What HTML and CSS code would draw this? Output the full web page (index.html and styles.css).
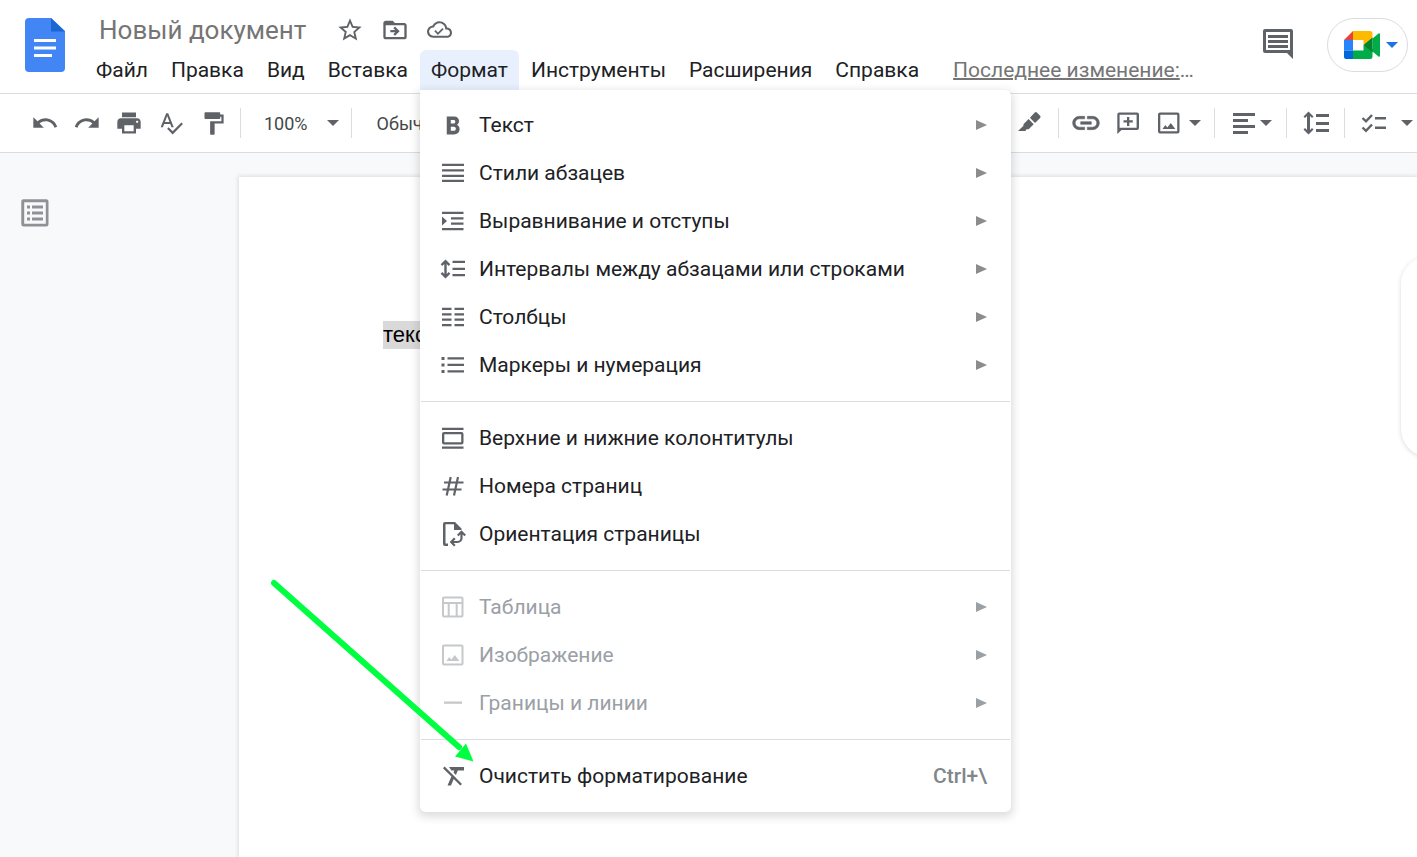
FILE: index.html
```html
<!DOCTYPE html>
<html lang="ru">
<head>
<meta charset="utf-8">
<meta name="viewport" content="width=device-width, initial-scale=1">
<title>Новый документ</title>
<link rel="stylesheet" href="styles.css">
</head>
<body>
<div class="app">
  <header class="header">
    <a class="logo" href="#" aria-label="Документы">
      <svg width="40" height="54" viewBox="0 0 40 54"><path fill="#4285f4" d="M4 0h22l14 13v37a4 4 0 0 1-4 4H4a4 4 0 0 1-4-4V4a4 4 0 0 1 4-4z"/><path fill="#1967d2" d="M26 0l14 13.500H26z"/><path fill="#fff" d="M9 21h22v3H9zM9 28.500h22v3H9zM9 36h18v3H9z"/></svg>
    </a>
    <div class="heading">
      <div class="title-row">
        <input class="title" type="text" value="Новый документ" aria-label="Название документа">
        <button class="title-btn" aria-label="Пометить"><svg width="28" height="28" viewBox="0 0 24 24"><path d="M22 9.240l-7.190-.62L12 2 9.190 8.630 2 9.240l5.460 4.730L5.820 21 12 17.270 18.180 21l-1.630-7.030L22 9.240zM12 15.400l-3.760 2.270 1-4.280-3.320-2.880 4.380-.38L12 6.100l1.710 4.040 4.380.38-3.320 2.880 1 4.280L12 15.400z"/></svg></button>
        <button class="title-btn" aria-label="Переместить"><svg width="28" height="28" viewBox="0 0 24 24"><path d="M20 6h-8l-2-2H4c-1.100 0-2 .9-2 2v12c0 1.100.9 2 2 2h16c1.100 0 2-.9 2-2V8c0-1.100-.9-2-2-2zm0 12H4V8h16v10zm-8-1l4-4-4-4-1.400 1.400 1.600 1.600H8v2h4.200l-1.600 1.600z"/></svg></button>
        <button class="title-btn" aria-label="Статус документа"><svg width="25" height="25" viewBox="0 0 24 24"><path d="M19.350 10.040A7.490 7.490 0 0 0 12 4C9.110 4 6.600 5.640 5.350 8.040A5.994 5.994 0 0 0 0 14c0 3.310 2.690 6 6 6h13c2.760 0 5-2.240 5-5 0-2.640-2.050-4.780-4.650-4.960zM19 18H6c-2.210 0-4-1.790-4-4s1.790-4 4-4h.71C7.370 7.690 9.480 6 12 6c3.040 0 5.500 2.460 5.500 5.500v.5H19c1.660 0 3 1.340 3 3s-1.340 3-3 3zm-8.500-3.200L8.200 12.500 7 13.700l3.500 3.500 5.500-5.500-1.200-1.200z"/></svg></button>
      </div>
      <nav class="menubar">
        <button class="menu-btn">Файл</button>
        <button class="menu-btn">Правка</button>
        <button class="menu-btn">Вид</button>
        <button class="menu-btn">Вставка</button>
        <div class="menu-open">
          <button class="menu-btn active" aria-expanded="true">Формат</button>
          <div class="dropdown">
            <button class="item"><span class="ico"><svg width="27" height="27" viewBox="0 0 24 24"><path d="M6 4h6.500c2.600 0 4.400 1.600 4.400 4 0 1.500-.7 2.700-1.900 3.400 1.500.7 2.400 2 2.400 3.800 0 2.900-2 4.800-5 4.800H6zm3.600 3v3.200h2.400c1 0 1.600-.6 1.600-1.600S13 7 12 7zm0 6v3.700h2.700c1.100 0 1.800-.7 1.800-1.800S13.400 13 12.300 13z"/></svg></span><span class="label">Текст</span><span class="tri"></span></button>
            <button class="item"><span class="ico"><svg width="28" height="28" viewBox="0 0 28 28"><path d="M3 4.700h22v2.300H3zM3 10.200h22v2.300H3zM3 15.700h22v2.300H3zM3 20.700h22v2.300H3z"/></svg></span><span class="label">Стили абзацев</span><span class="tri"></span></button>
            <button class="item"><span class="ico"><svg width="28" height="28" viewBox="0 0 28 28"><path d="M3 4.700h21.500v2.300H3zM12 10.200h12.500v2.300H12zM12 15.500h12.500v2.300H12zM3 20.900h21.500v2.300H3zM3 9.500l5 4.500-5 4.500z"/></svg></span><span class="label">Выравнивание и отступы</span><span class="tri"></span></button>
            <button class="item"><span class="ico"><svg width="28" height="28" viewBox="0 0 28 28"><path d="M13.500 5.800H26v2.300H13.500zM13.500 12.800H26v2.300H13.500zM13.500 19H26v2.300H13.500zM6.500 4.500l4.800 4.800-1.600 1.600-2-2v10.200l2-2 1.600 1.600-4.800 4.800-4.800-4.800 1.600-1.600 2 2V8.900l-2 2-1.600-1.600z"/></svg></span><span class="label">Интервалы между абзацами или строками</span><span class="tri"></span></button>
            <button class="item"><span class="ico"><svg width="28" height="28" viewBox="0 0 28 28"><path d="M3 4.700h9.500v2.300H3zM15.500 4.700H25v2.300h-9.500zM3 10.200h9.500v2.300H3zM15.500 10.200H25v2.300h-9.500zM3 15.500h9.500v2.300H3zM15.500 15.500H25v2.300h-9.500zM3 20.900h9.500v2.300H3zM15.500 20.900H25v2.300h-9.500z"/></svg></span><span class="label">Столбцы</span><span class="tri"></span></button>
            <button class="item"><span class="ico"><svg width="28" height="28" viewBox="0 0 28 28"><path d="M8.500 6.200H25v2.300H8.500zM8.500 12.700H25v2.300H8.500zM8.500 19.200H25v2.300H8.500zM2.500 6H5.500v3H2.500zM2.500 12.500H5.500v3H2.500zM2.500 19H5.500v3H2.500z"/></svg></span><span class="label">Маркеры и нумерация</span><span class="tri"></span></button>
            <hr class="rule">
            <button class="item"><span class="ico"><svg width="28" height="28" viewBox="0 0 28 28"><path fill-rule="evenodd" d="M3 3.800h21.500v2.300H3zM3 22.500h21.500v2.300H3zM5 8h17.500a2 2 0 0 1 2 2v8.500a2 2 0 0 1-2 2H5a2 2 0 0 1-2-2V10a2 2 0 0 1 2-2zm.3 2.300v7.900h16.900v-7.900z"/></svg></span><span class="label">Верхние и нижние колонтитулы</span></button>
            <button class="item"><span class="ico"><svg width="28" height="28" viewBox="0 0 28 28"><path fill="none" stroke="#5f6368" stroke-width="2.200" d="M11.700 5L7.700 23.500M19 5l-4 18.500M5 10.500h19.500M3.500 17.500h19"/></svg></span><span class="label">Номера страниц</span></button>
            <button class="item"><span class="ico"><svg width="28" height="28" viewBox="0 0 28 28"><path d="M6 2h10l6.500 6.500V10H15V4.300H6.500v19.200H9V26H6a2 2 0 0 1-2-2V4a2 2 0 0 1 2-2z"/><path fill="none" stroke="#5f6368" stroke-width="2.200" d="M13 22h5.500a4 4 0 0 0 4-4v-5M15.800 18.300L12.200 22l3.600 3.700M18.800 15.500l3.700-3.700 3.700 3.700"/></svg></span><span class="label">Ориентация страницы</span></button>
            <hr class="rule">
            <button class="item" disabled><span class="ico"><svg width="28" height="28" viewBox="0 0 28 28"><path fill-rule="evenodd" d="M5 3.500h17.500a2 2 0 0 1 2 2v17a2 2 0 0 1-2 2H5a2 2 0 0 1-2-2v-17a2 2 0 0 1 2-2zm0 2v3.500h17.500V5.500zM5 11v11.500h3.700V11zm5.700 0v11.500h6V11zm8 0v11.500h3.800V11z"/></svg></span><span class="label">Таблица</span><span class="tri"></span></button>
            <button class="item" disabled><span class="ico"><svg width="28" height="28" viewBox="0 0 28 28"><path fill-rule="evenodd" d="M5 3.500h17.500a2 2 0 0 1 2 2v17a2 2 0 0 1-2 2H5a2 2 0 0 1-2-2v-17a2 2 0 0 1 2-2zm0 2v17h17.500v-17zM7.500 20l2.800-4 2 2.500 3.500-4.500 4.500 6z"/></svg></span><span class="label">Изображение</span><span class="tri"></span></button>
            <button class="item" disabled><span class="ico"><svg width="28" height="28" viewBox="0 0 28 28"><path d="M5 12.500h18v2.300H5z"/></svg></span><span class="label">Границы и линии</span><span class="tri"></span></button>
            <hr class="rule">
            <button class="item"><span class="ico"><svg width="28" height="28" viewBox="0 0 28 28"><path d="M10 5h15v3.500h-6.200L16.900 13l-2.400-2.400.9-2.100h-3zM4 6.200L5.600 4.600 23 22l-1.600 1.600-6.700-6.700L12 23.500H8.500l3.900-8.900z"/></svg></span><span class="label">Очистить форматирование</span><span class="shortcut">Ctrl+\</span></button>
          </div>
        </div>
        <button class="menu-btn">Инструменты</button>
        <button class="menu-btn">Расширения</button>
        <button class="menu-btn">Справка</button>
        <span class="last-edit"><a class="last-link" href="#">Последнее изменение:</a>…</span>
      </nav>
    </div>
    <div class="header-right">
      <button class="comments" aria-label="История комментариев"><svg width="32" height="32" viewBox="0 0 32 32"><path fill-rule="evenodd" d="M3 0h26a2 2 0 0 1 2 2v28l-6-6H3a2 2 0 0 1-2-2V2a2 2 0 0 1 2-2zm1 3v18h24V3zM6 6h20v3H6zM6 11h20v3H6zM6 16h20v3H6z"/></svg></button>
      <button class="meet" aria-label="Видеовстреча">
        <svg width="36" height="28" viewBox="0 0 36 28"><path fill="#ea4335" d="M0 9l9-9v9z"/><path fill="#2684fc" d="M0 9h9v10.500H0z"/><path fill="#0066da" d="M0 19.500h9V28H2a2 2 0 0 1-2-2z"/><path fill="#ffba00" d="M9 0h17a2.500 2.500 0 0 1 2.500 2.500V9l-9 5V9H9z"/><path fill="#00ac47" d="M9 19.500h10.500V14l9 4v7.500A2.500 2.500 0 0 1 26 28H9zM28.500 7.500L34.500 2.500c.7-.5 1.500-.1 1.500.7v21.600c0 .8-.8 1.200-1.500.7l-6-5z"/><path fill="#00832d" d="M19.500 14l9-7.500v15z"/></svg>
        <span class="caret blue"></span>
      </button>
    </div>
  </header>

  <div class="toolbar">
    <button class="tool" aria-label="Отменить"><svg width="28" height="28" viewBox="0 0 24 24"><path d="M12.500 8c-2.650 0-5.050.99-6.900 2.600L2 7v9h9l-3.620-3.620c1.390-1.160 3.160-1.880 5.120-1.880 3.540 0 6.550 2.310 7.600 5.500l2.370-.78C21.080 11.030 17.150 8 12.500 8z"/></svg></button>
    <button class="tool" aria-label="Повторить"><svg width="28" height="28" viewBox="0 0 24 24"><path d="M18.400 10.600C16.550 8.990 14.150 8 11.500 8c-4.650 0-8.580 3.030-9.960 7.220L3.900 16c1.050-3.190 4.050-5.500 7.600-5.500 1.950 0 3.730.72 5.120 1.880L13 16h9V7l-3.600 3.600z"/></svg></button>
    <button class="tool" aria-label="Печать"><svg width="28" height="28" viewBox="0 0 24 24"><path d="M19 8H5c-1.660 0-3 1.340-3 3v6h4v4h12v-4h4v-6c0-1.660-1.340-3-3-3zm-3 11H8v-5h8v5zm3-7c-.55 0-1-.45-1-1s.45-1 1-1 1 .45 1 1-.45 1-1 1zm-1-9H6v4h12V3z"/></svg></button>
    <button class="tool" aria-label="Правописание"><svg width="26" height="26" viewBox="0 0 24 24"><path d="M12.450 16h2.090L9.430 3H7.570L2.460 16h2.090l1.120-3h5.640l1.140 3zm-6.020-5L8.500 5.480 10.570 11H6.430zm15.160.59l-8.090 8.090L9.830 16l-1.410 1.410 5.090 5.090L23 13l-1.410-1.410z"/></svg></button>
    <button class="tool" aria-label="Копировать форматирование"><svg width="27" height="27" viewBox="0 0 24 24"><path d="M18 4V3c0-.55-.45-1-1-1H5c-.55 0-1 .45-1 1v4c0 .55.45 1 1 1h12c.55 0 1-.45 1-1V6h1v4H9v11c0 .55.45 1 1 1h2c.55 0 1-.45 1-1v-9h8V4h-3z"/></svg></button>
    <span class="sep"></span>
    <button class="zoom">100%<span class="caret"></span></button>
    <span class="sep"></span>
    <button class="style">Обычный</button>
    <span class="spacer"></span>
    <button class="tool narrow" aria-label="Цвет выделения"><svg width="24" height="24" viewBox="0 0 24 24"><path d="M16.800 1.600a1.500 1.500 0 0 1 2.100 0l3.200 3.200a1.500 1.500 0 0 1 0 2.100L17 11.900 11.900 6.800zM10.600 8.100l5.100 5.100-4.500 4.500c-.7.700-1.600.8-2.300.4L7.300 20H0l5.500-5.300c-.3-.7-.1-1.500.4-2z"/></svg></button>
    <span class="sep"></span>
    <button class="tool" aria-label="Ссылка"><svg width="32" height="32" viewBox="0 0 24 24"><path stroke="#5f6368" stroke-width=".4" d="M3.900 12c0-1.710 1.390-3.100 3.100-3.100h4V7H7c-2.760 0-5 2.240-5 5s2.240 5 5 5h4v-1.900H7c-1.710 0-3.100-1.390-3.100-3.100zM8 13h8v-2H8v2zm9-6h-4v1.900h4c1.710 0 3.100 1.390 3.100 3.100s-1.390 3.100-3.100 3.100h-4V17h4c2.760 0 5-2.240 5-5s-2.240-5-5-5z"/></svg></button>
    <button class="tool" aria-label="Добавить комментарий"><svg width="28" height="28" viewBox="0 0 28 28"><path fill-rule="evenodd" d="M5 3.500h18a2 2 0 0 1 2 2v13.500a2 2 0 0 1-2 2H7.500L3.300 25V5.500a2 2 0 0 1 2-2zm.6 2.300v13h17v-13zM13 8h2.300v3.300h3.500v2.300h-3.500V17H13v-3.400H9.500v-2.300H13z"/></svg></button>
    <button class="tool pair" aria-label="Изображение"><svg width="28" height="28" viewBox="0 0 28 28"><path fill-rule="evenodd" d="M5 3.500h17.500a2 2 0 0 1 2 2v17a2 2 0 0 1-2 2H5a2 2 0 0 1-2-2v-17a2 2 0 0 1 2-2zm.3 2.300v16.400h16.900V5.800zM7.500 20l2.800-4 2 2.500 3.500-4.500 4.500 6z"/></svg><span class="caret"></span></button>
    <span class="sep"></span>
    <button class="tool align" aria-label="Выравнивание"><svg width="24" height="24" viewBox="0 0 24 24"><path d="M1 2h22v3H1zM1 8h15v3H1zM1 14h22v3H1zM1 20h15v3H1z"/></svg><span class="caret"></span></button>
    <span class="sep"></span>
    <button class="tool spacing" aria-label="Интервал"><svg width="28" height="28" viewBox="0 0 28 28"><path d="M14 5h13v3H14zM14 13h13v3H14zM14 20h13v3H14zM6.500 2.500l5 5-1.500 1.500-2-2v14l2-2 1.500 1.500-5 5-5-5L3 19l2 2V7L3 9 1.500 7.500z"/></svg></button>
    <span class="sep"></span>
    <button class="tool checks" aria-label="Контрольный список"><svg width="26" height="26" viewBox="0 0 26 26"><path d="M14 7h11v2.500H14zM14 16.500h11v2.500H14z"/><path fill="none" stroke="#5f6368" stroke-width="2.400" d="M1.500 8l3.500 3.300L11 5M1.500 17.500L5 20.800l6-6.300"/></svg><span class="caret"></span></button>
  </div>

  <main class="workspace">
    <aside class="outline">
      <button class="outline-btn" aria-label="Структура документа"><svg width="28" height="28" viewBox="0 0 28 28"><path fill="#8f9196" fill-rule="evenodd" d="M3 .3h22A2.500 2.500 0 0 1 27.500 3v22a2.500 2.500 0 0 1-2.500 2.500H3A2.500 2.500 0 0 1 .3 25V3A2.500 2.500 0 0 1 3 .3zM3.200 3.200v21.600h21.600V3.200zM6 6.500h3v3H6zM11 6.500h11v3H11zM6 12.500h3v3H6zM11 12.500h11v3H11zM6 18.500h3v3H6zM11 18.500h11v3H11z"/></svg></button>
    </aside>
    <article class="page"><p class="para"><mark class="selected">текст</mark></p></article>
    <div class="side-tools"></div>
  </main>
  <svg class="pointer" width="210" height="190" viewBox="0 0 210 190" aria-hidden="true"><path d="M9 9L194 173" fill="none" stroke="#00ff40" stroke-width="6" stroke-linecap="round"/><path d="M201 169.500L208.500 187.500 190 182.500z" fill="#00ff40"/></svg>
</div>
</body>
</html>
```
FILE: styles.css
```css
* { box-sizing: border-box; }
body { margin: 0; font-family: Roboto, "Noto Sans", sans-serif; color: #202124; background: #fff; }
button, input { font: inherit; color: inherit; background: none; border: 0; padding: 0; margin: 0; }
svg { display: block; flex: none; fill: #5f6368; }

.app { position: relative; min-height: 100vh; display: flex; flex-direction: column; overflow: hidden; }

.header { display: flex; align-items: flex-start; height: 94px; border-bottom: 1px solid #dadce0; }
.logo { padding: 18px 0 0 25px; }
.heading { padding: 9px 0 0 20px; }
.title-row { display: flex; align-items: center; height: 41px; padding-left: 14px; }
.title { width: 228px; font-size: 26px; color: #757575; }
.title-btn { width: 45px; height: 40px; display: flex; align-items: center; justify-content: center; }

.menubar { display: flex; gap: 1px; font-size: 21px; line-height: 40px; white-space: nowrap; }
.menu-btn { height: 40px; padding: 0 11px; border-radius: 6px 6px 0 0; }
.menu-open { position: relative; }
.active { background: #e8f0fe; }
.last-edit { padding-left: 22px; color: #757575; }
.last-link { color: inherit; text-decoration-thickness: 2px; }

.dropdown { position: absolute; z-index: 2; top: 40px; left: 0; width: 591px; padding: 11px 0 12px; background: #fff; border-radius: 0 6px 6px 6px; box-shadow: 0 3px 9px 2px rgba(60, 64, 67, .18); }
.item { display: flex; align-items: center; gap: 12px; width: 100%; height: 48px; padding: 0 24px 0 19px; text-align: left; line-height: 28px; }
.item:disabled { color: #9aa0a6; }
.item:disabled .ico { opacity: .35; }
.ico { width: 28px; height: 28px; display: flex; align-items: center; justify-content: center; }
.label { flex: 1; }
.tri { border-left: 11px solid #8c8c8c; border-top: 5px solid transparent; border-bottom: 5px solid transparent; }
.item:disabled .tri { border-left-color: #9aa0a6; }
.shortcut { color: #80868b; font-weight: 500; }
.rule { margin: 12px 1px; border: 0; border-top: 1px solid #dadce0; }

.header-right { margin-left: auto; display: flex; align-items: center; gap: 33px; padding: 18px 9px 0 0; }
.meet { display: flex; align-items: center; gap: 6px; height: 54px; padding: 0 9px 0 16px; border: 1px solid #dadce0; border-radius: 27px; }
.caret { flex: none; border-top: 6px solid #5f6368; border-left: 6px solid transparent; border-right: 6px solid transparent; }
.blue { border-top-color: #1a73e8; }

.toolbar { display: flex; align-items: center; height: 59px; padding-left: 24px; border-bottom: 1px solid #dadce0; font-size: 18px; color: #444746; white-space: nowrap; }
.tool { flex: none; display: flex; align-items: center; justify-content: center; width: 42px; height: 42px; }
.sep { flex: none; width: 1px; height: 30px; background: #dadce0; }
.tool + .sep { margin-left: 6px; }
.zoom { display: flex; align-items: center; gap: 19px; padding: 0 12px 0 23px; }
.style { padding-left: 25px; }
.spacer { flex: 1; }
.narrow { width: 48px; }
.toolbar .narrow + .sep { margin: 0 6px 0 4px; }
.pair { width: 54px; gap: 6px; padding-left: 4px; }
.toolbar .pair + .sep { margin: 0 0 0 11px; }
.align { width: 71px; gap: 4px; padding-left: 2px; }
.toolbar .align + .sep { margin: 0; }
.spacing { width: 57px; }
.toolbar .spacing + .sep { margin: 0; }
.checks { width: 72px; gap: 14px; padding-left: 12px; }

.workspace { flex: 1; display: flex; position: relative; background: #f8f9fb; }
.outline { width: 239px; padding: 46px 0 0 21px; }
.page { flex: 1; margin-top: 24px; padding: 144px 144px 0; background: #fff; box-shadow: 0 0 4px 1px rgba(60, 64, 67, .15); }
.para { margin: 0; font: 22px/28px "Liberation Sans", Arial, sans-serif; color: #000; }
.selected { display: inline-block; background: #d9d9d9; color: inherit; }
.side-tools { position: absolute; top: 103px; right: -40px; width: 56px; height: 201px; background: #fff; border-radius: 28px; box-shadow: 0 1px 4px rgba(60, 64, 67, .2); }
.pointer { position: absolute; z-index: 3; left: 265px; top: 574px; }
```
